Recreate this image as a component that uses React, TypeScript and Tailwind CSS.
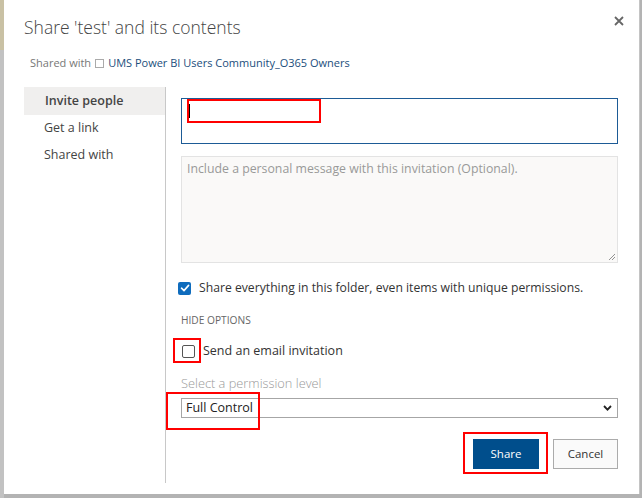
import React from "react";

const NAV = ["Invite people", "Get a link", "Shared with"] as const;

function CheckedBox() {
  return (
    <span className="flex h-[13px] w-[13px] items-center justify-center rounded-[2px] bg-[#0f6cbd]">
      <svg width="10" height="10" viewBox="0 0 10 10" fill="none">
        <path d="M1.5 5.2 4 7.6 8.6 2.4" stroke="white" strokeWidth="1.6" strokeLinecap="round" strokeLinejoin="round" />
      </svg>
    </span>
  );
}

export default function App() {
  return (
    <div
      className="flex h-[498px] w-[642px] overflow-hidden bg-[#b3b3b3] text-[#333]"
      style={{ fontFamily: '"Open Sans", "Noto Sans", sans-serif' }}
    >
      <div className="flex w-[4px] flex-col">
        <div className="h-[50px] bg-[#c9c1a4]" />
        <div className="flex-1 bg-[#c2c2c2]" />
      </div>

      <div className="relative h-[494px] w-[636px] border-r border-[#c4c4c4] bg-white">
        <div className="flex items-start justify-between pl-[20px] pr-[15px] pt-[14px]">
          <h1 className="text-[17.5px] font-light leading-[26px] text-[#444]">Share 'test' and its contents</h1>
          <button type="button" className="mt-[2px] text-[#666]">
            <svg width="10" height="10" viewBox="0 0 10 10">
              <path d="M1 1 9 9M9 1 1 9" stroke="currentColor" strokeWidth="1.8" />
            </svg>
          </button>
        </div>

        <div className="mt-[15px] flex items-center pl-[26px] text-[11px] leading-[16px]">
          <span className="text-[#777]">Shared with</span>
          <span className="ml-[4px] h-[9px] w-[9px] border border-[#aaa]" />
          <span className="ml-[4px] text-[#1b4e7c]">UMS Power BI Users Community_O365 Owners</span>
        </div>

        <div className="mt-[16px] flex pl-[20px]">
          <nav className="w-[141px]">
            {NAV.map((item, i) => (
              <div
                key={item}
                className={
                  i === 0
                    ? "flex h-[28px] items-center bg-[#f0efee] pl-[21px] text-[12.5px] font-semibold text-[#444]"
                    : "flex h-[27px] items-center pl-[20px] text-[12.5px] text-[#444]"
                }
              >
                {item}
              </div>
            ))}
          </nav>

          <div className="h-[396px] w-px bg-[#c8c8c8]" />

          <main className="flex w-[452px] flex-col pl-[15px] pt-[11px]">
            <div className="relative h-[46px] w-[437px] border border-[#1d5b96]">
              <span className="absolute left-[7px] top-[5px] h-[14px] w-px bg-black" />
            </div>

            <div className="relative mt-[12px] h-[107px] w-[437px] border border-[#e3e3e3] bg-[#faf9f8] px-[5px] pt-[3px] text-[12.3px] text-[#999]">
              Include a personal message with this invitation (Optional).
              <svg className="absolute bottom-[1px] right-[1px]" width="8" height="8" viewBox="0 0 8 8">
                <path d="M7 1 1 7M7 4 4 7" stroke="#777" strokeWidth="0.8" />
              </svg>
            </div>

            <label className="-ml-[3px] mt-[18px] flex h-[14px] items-center gap-[8px] text-[12.2px]">
              <CheckedBox />
              <span>Share everything in this folder, even items with unique permissions.</span>
            </label>

            <div className="mt-[18px] h-[14px] text-[10.2px] leading-[14px] text-[#666]">HIDE OPTIONS</div>

            <label className="ml-[1px] mt-[18px] flex h-[13px] items-center gap-[8px] text-[12.5px]">
              <span className="h-[13px] w-[13px] rounded-[2px] border border-[#555]" />
              <span>Send an email invitation</span>
            </label>

            <div className="mt-[16px] text-[12.8px] font-light leading-[18px] text-[#999]">Select a permission level</div>

            <div className="mt-[6px] flex h-[20px] w-[437px] items-center justify-between border border-[#a6a6a6] pl-[4px] pr-[5px] text-[12.5px] text-[#222]">
              <span>Full Control</span>
              <svg width="9" height="6" viewBox="0 0 9 6">
                <path d="M1 1 4.5 4.6 8 1" stroke="#222" strokeWidth="1.8" fill="none" />
              </svg>
            </div>

            <div className="mt-[21px] flex w-[437px] justify-end gap-[14px]">
              <button type="button" className="h-[30px] w-[66px] bg-[#004e8c] text-[11.5px] text-white">
                Share
              </button>
              <button type="button" className="h-[30px] w-[65px] border border-[#ababab] bg-[#fafafa] text-[11.5px] text-[#333]">
                Cancel
              </button>
            </div>
          </main>
        </div>

        <div className="pointer-events-none absolute left-[183px] top-[99px] h-[24px] w-[134px] border-2 border-[#ff0000]" />
        <div className="pointer-events-none absolute left-[169px] top-[338px] h-[25px] w-[28px] border-2 border-[#ff0000]" />
        <div className="pointer-events-none absolute left-[162px] top-[392px] h-[38px] w-[94px] border-2 border-[#ff0000]" />
        <div className="pointer-events-none absolute left-[459px] top-[432px] h-[42px] w-[85px] border-2 border-[#ff0000]" />
      </div>
    </div>
  );
}
